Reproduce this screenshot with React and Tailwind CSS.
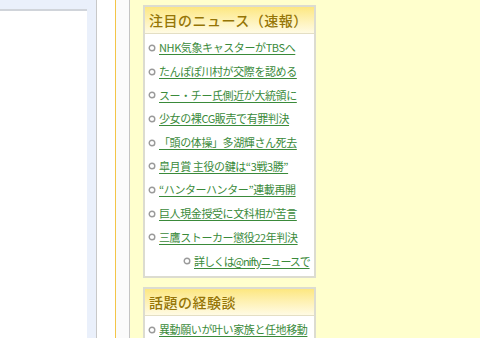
import React from "react";

const news = [
  "NHK気象キャスターがTBSへ",
  "たんぽぽ川村が交際を認める",
  "スー・チー氏側近が大統領に",
  "少女の裸CG販売で有罪判決",
  "「頭の体操」多湖輝さん死去",
  "皐月賞 主役の鍵は“3戦3勝”",
  "“ハンターハンター”連載再開",
  "巨人現金授受に文科相が苦言",
  "三鷹ストーカー懲役22年判決",
];

function Bullet() {
  return (
    <svg width="8" height="8" viewBox="0 0 8 8" className="shrink-0">
      <circle cx="4" cy="4" r="2.8" fill="#fff" stroke="#9a9a9a" strokeWidth="1.4" />
    </svg>
  );
}

function Item({ text, indent }) {
  return (
    <li className={"flex items-center gap-[3px] h-[23.7px] " + (indent ? "pl-[38px]" : "pl-[3px]")}>
      <Bullet />
      <a
        href="#"
        className={
          "text-[11px] leading-none text-[#3a8a3a] underline underline-offset-2 whitespace-nowrap " +
          (indent ? "tracking-[-1.1px]" : "tracking-[-0.4px]")
        }
      >
        {text}
      </a>
    </li>
  );
}

function Box({ title, children }) {
  return (
    <div className="w-[173px] border-2 border-[#dcdcd0] bg-white">
      <div className="h-[27px] flex items-center px-[4px] bg-gradient-to-b from-[#fde77f] to-[#fffbe4] border-b border-[#e4dfc4]">
        <span className="text-[14px] leading-none font-medium text-[#957506] tracking-[0.5px]">{title}</span>
      </div>
      {children}
    </div>
  );
}

export default function App() {
  return (
    <div
      className="flex w-[480px] h-[338px] overflow-hidden"
      style={{ fontFamily: '"Noto Sans CJK JP", "Noto Sans", sans-serif' }}
    >
      <div className="w-[96px] bg-[#eaf0fb] pt-[9px]">
        <div className="w-[87px] h-full bg-white border-t-2 border-[#d0d4da]" />
      </div>
      <div className="w-px bg-[#c8c8c8]" />
      <div className="w-[18px] bg-white" />
      <div className="w-px bg-[#f3c548]" />
      <div className="w-[13px] bg-[#fbfbfb]" />
      <div className="w-px bg-[#c4c4c4]" />
      <div className="flex-1 bg-[#ffffcd] pl-[13px] pt-[5px] flex flex-col gap-[9px]">
        <Box title="注目のニュース（速報）">
          <ul className="pt-[2px] pb-[3px]">
            {news.map((n) => (
              <Item key={n} text={n} />
            ))}
            <Item text="詳しくは@niftyニュースで" indent />
          </ul>
        </Box>
        <Box title="話題の経験談">
          <ul className="pt-[2px]">
            <Item text="異動願いが叶い家族と任地移動" />
          </ul>
        </Box>
      </div>
    </div>
  );
}
